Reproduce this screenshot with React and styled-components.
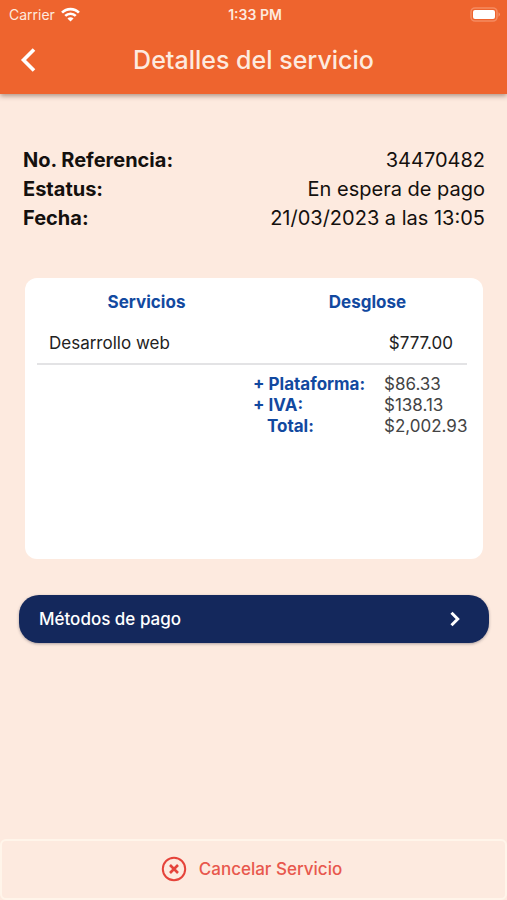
import React from "react";
import styled, { createGlobalStyle } from "styled-components";

const GlobalStyle = createGlobalStyle`
  * {
    box-sizing: border-box;
  }
  body {
    margin: 0;
    background: #fdeadf;
    font-family: Inter, "Liberation Sans", sans-serif;
  }
`;

const Screen = styled.div`
  min-height: 100vh;
  display: flex;
  flex-direction: column;
`;

const Header = styled.header`
  background: #ee642e;
  color: #fdeadf;
  box-shadow: 0 2px 5px rgba(80, 40, 20, 0.45);
`;

const StatusBar = styled.div`
  display: grid;
  grid-template-columns: 1fr auto 1fr;
  align-items: center;
  height: 28px;
  padding: 0 6px 0 9px;
  font-size: 14px;
`;

const Carrier = styled.span`
  display: flex;
  align-items: center;
  gap: 6px;
`;

const Clock = styled.span`
  font-weight: 600;
`;

const Battery = styled.svg`
  justify-self: end;
`;

const NavBar = styled.div`
  display: grid;
  grid-template-columns: 56px 1fr 56px;
  align-items: center;
  height: 66px;
  padding-bottom: 2px;
`;

const BackButton = styled.button`
  display: flex;
  align-items: center;
  justify-content: center;
  height: 48px;
  padding: 0;
  border: none;
  background: none;
  color: inherit;
  cursor: pointer;
`;

const Title = styled.h1`
  margin: 0;
  font-size: 25px;
  font-weight: 500;
  text-align: center;
`;

const Content = styled.main`
  flex: 1;
  padding: 52px 18px 24px 19px;
`;

const Info = styled.dl`
  margin: 0 4px 45px;
`;

const InfoRow = styled.div`
  display: flex;
  justify-content: space-between;
  font-size: 20px;
  line-height: 29px;
  color: #14100e;

  dt {
    font-weight: 700;
  }
  dd {
    margin: 0;
  }
`;

const Card = styled.section`
  min-height: 281px;
  margin: 0 6px 36px;
  padding: 8px 16px 16px 12px;
  border-radius: 12px;
  background: #fff;
`;

const Table = styled.table`
  width: 100%;
  table-layout: fixed;
  border-collapse: collapse;
  font-size: 17px;
`;

const Th = styled.th`
  height: 32px;
  padding: 0 0 0 ${props => props.$indent};
  color: #1249a0;
  font-weight: 700;
  text-align: center;
`;

const Td = styled.td`
  height: 46px;
  padding: 4px 14px 0 12px;
  border-bottom: 2px solid #e3e3e5;
  color: #222;
  text-align: ${props => props.$align || "left"};
`;

const Totals = styled.dl`
  display: grid;
  grid-template-columns: 116px 83px;
  column-gap: 15px;
  justify-content: end;
  margin: 9px 0 0;
  font-size: 17px;
  line-height: 21px;

  dt {
    color: #1249a0;
    font-weight: 700;
  }
  dd {
    margin: 0;
    color: #444;
  }
`;

const TotalLabel = styled.dt`
  padding-left: ${props => (props.$last ? "14px" : "0")};
`;

const PayButton = styled.button`
  display: flex;
  align-items: center;
  justify-content: space-between;
  width: 100%;
  height: 48px;
  padding: 0 24px 0 20px;
  border: none;
  border-radius: 20px;
  background: #14285c;
  color: #fff;
  font-family: inherit;
  font-size: 17px;
  font-weight: 500;
  box-shadow: 0 1px 3px rgba(20, 20, 40, 0.35);
  cursor: pointer;
`;

const CancelButton = styled.button`
  display: flex;
  align-items: center;
  justify-content: center;
  gap: 12px;
  height: 61px;
  padding: 0 4px 2px 0;
  border: 2px solid #fff5ea;
  border-radius: 6px;
  background: #fdeadf;
  color: #e8584d;
  font-family: inherit;
  font-size: 17px;
  font-weight: 500;
  cursor: pointer;
`;

const info = [
  { label: "No. Referencia:", value: "34470482" },
  { label: "Estatus:", value: "En espera de pago" },
  { label: "Fecha:", value: "21/03/2023 a las 13:05" },
];

const services = [{ name: "Desarrollo web", price: "$777.00" }];

const totals = [
  { label: "+ Plataforma:", value: "$86.33" },
  { label: "+ IVA:", value: "$138.13" },
  { label: "Total:", value: "$2,002.93", last: true },
];

function WifiIcon() {
  return (
    <svg width="19" height="15" viewBox="0 0 18 14" fill="none" stroke="#fff" strokeWidth="2.5">
      <path d="M1 5.2C5.4 .8 12.6 .8 17 5.2" />
      <path d="M4 8.3C6.8 5.6 11.2 5.6 14 8.3" />
      <path d="M9 13.6L6.1 10.7C7.7 9.2 10.3 9.2 11.9 10.7Z" fill="#fff" stroke="none" />
    </svg>
  );
}

function BatteryIcon() {
  return (
    <Battery width="31" height="15" viewBox="0 0 31 15">
      <rect x="1" y="1" width="26" height="13" rx="4" fill="none" stroke="#f58a60" strokeWidth="1.6" />
      <rect x="3" y="3" width="22" height="9" rx="2" fill="#fff" />
      <path d="M28.6 5.3Q31 7.5 28.6 9.7Z" fill="#f7a27f" />
    </Battery>
  );
}

function ServiceTable() {
  return (
    <Card>
      <Table>
        <thead>
          <tr>
            <Th $indent="4px">Servicios</Th>
            <Th $indent="16px">Desglose</Th>
          </tr>
        </thead>
        <tbody>
          {services.map(service => (
            <tr key={service.name}>
              <Td>{service.name}</Td>
              <Td $align="right">{service.price}</Td>
            </tr>
          ))}
        </tbody>
      </Table>
      <Totals>
        {totals.map(total => (
          <React.Fragment key={total.label}>
            <TotalLabel $last={total.last}>{total.label}</TotalLabel>
            <dd>{total.value}</dd>
          </React.Fragment>
        ))}
      </Totals>
    </Card>
  );
}

function App() {
  return (
    <Screen>
      <GlobalStyle />
      <Header>
        <StatusBar>
          <Carrier>
            Carrier <WifiIcon />
          </Carrier>
          <Clock>1:33 PM</Clock>
          <BatteryIcon />
        </StatusBar>
        <NavBar>
          <BackButton aria-label="Volver">
            <svg width="16" height="26" viewBox="0 0 16 26" fill="none" stroke="#fff" strokeWidth="3.6">
              <path d="M14 2.5L3.5 13L14 23.5" />
            </svg>
          </BackButton>
          <Title>Detalles del servicio</Title>
        </NavBar>
      </Header>
      <Content>
        <Info>
          {info.map(item => (
            <InfoRow key={item.label}>
              <dt>{item.label}</dt>
              <dd>{item.value}</dd>
            </InfoRow>
          ))}
        </Info>
        <ServiceTable />
        <PayButton>
          Métodos de pago
          <svg width="20" height="20" viewBox="0 0 20 20" fill="none" stroke="currentColor" strokeWidth="3">
            <path d="M6.5 3.8L12.7 10L6.5 16.2" />
          </svg>
        </PayButton>
      </Content>
      <CancelButton>
        <svg width="26" height="26" viewBox="0 0 26 26" fill="none" stroke="#e5433a" strokeWidth="2">
          <circle cx="13" cy="13" r="11.2" />
          <path d="M9 9L17 17M17 9L9 17" strokeWidth="2.6" />
        </svg>
        Cancelar Servicio
      </CancelButton>
    </Screen>
  );
}

export default App;
